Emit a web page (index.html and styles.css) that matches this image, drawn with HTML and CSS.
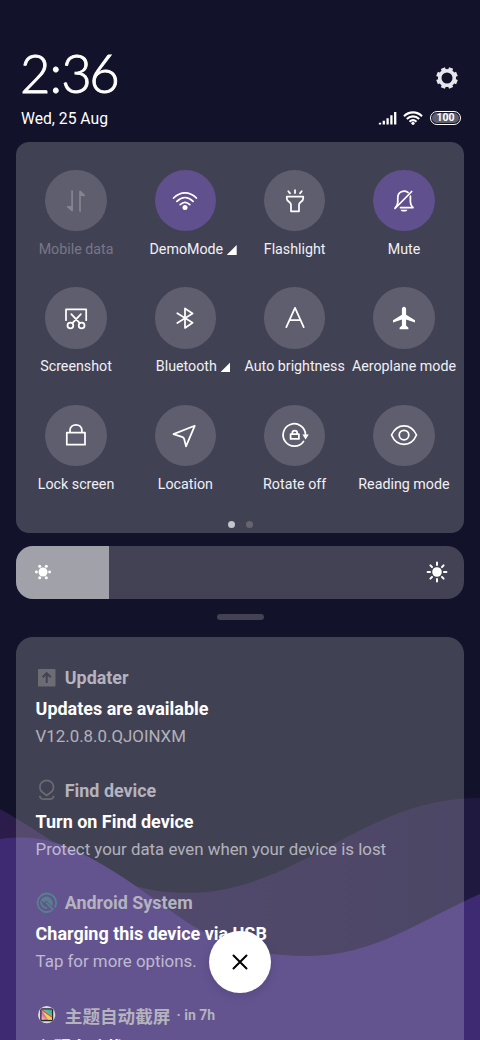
FILE: index.html
```html
<!DOCTYPE html>
<html lang="en">
<head>
<meta charset="utf-8">
<title>Control centre</title>
<link rel="stylesheet" href="styles.css">
</head>
<body>
<div class="screen">
  <svg class="wallpaper" viewBox="0 0 480 1040">
    <defs>
      <linearGradient id="back" x1="0" x2="1" y1="0" y2="0">
        <stop offset="0" stop-color="#2c1c4b"/><stop offset=".45" stop-color="#251c46"/><stop offset="1" stop-color="#20193f"/>
      </linearGradient>
    </defs>
    <path fill="url(#back)" d="M0 809C30 826 52 841 72 855C105 878 140 893 187 893C245 893 290 867 340 841C385 817 425 798 480 798V1040H0Z"/>
    <path fill="#3d2a73" d="M0 839C35 834 60 842 85 855C120 873 150 896 185 921C225 947 262 956 307 956C375 956 420 920 480 894V1040H0Z"/>
  </svg>

  <header class="header">
    <div class="header-row">
      <div class="clock">2<span class="colon">:</span>36</div>
      <svg class="gear" viewBox="-12 -12 24 24" fill="none" stroke="#e6e6ec"><circle r="7.3" stroke-width="3.6"/><path stroke-width="4.4" transform="rotate(22.5)" d="M0-7.5V-10.8M0 7.5V10.8M-7.5 0H-10.8M7.5 0H10.8M5.3-5.3 7.6-7.6M-5.3 5.3-7.6 7.6M-5.3-5.3-7.6-7.6M5.3 5.3 7.6 7.6"/></svg>
    </div>
    <div class="status-row">
      <div class="date">Wed, 25 Aug</div>
      <div class="status">
        <svg width="19" height="14" viewBox="0 0 19 14" stroke="#fff" stroke-width="2.3"><path d="M2 13.5V11.8M5.8 13.5V9.8M9.6 13.5V7.2M13.4 13.5V4.2M17.2 13.5V1"/></svg>
        <svg width="20" height="14" viewBox="0 0 20 14" fill="none" stroke="#fff" stroke-width="2.1"><path d="M1 5.2C6 .1 14 .1 19 5.2M3.8 8.1C7.5 4.5 12.5 4.5 16.2 8.1M6.5 10.8C8.6 8.9 11.4 8.9 13.5 10.8"/><circle cx="10" cy="12.3" r="1.6" fill="#fff" stroke="none"/></svg>
        <div class="battery"><span>100</span></div>
      </div>
    </div>
  </header>

  <section class="toggles">
    <div class="grid">
      <div class="tile disabled"><div class="disc"><svg viewBox="0 0 30 30"><path d="M11.1 5V24.5L6.8 20.7M19 25V5.5L23.2 9.5"/><path class="solid" d="M11.5 24.8 6.3 20H11.5ZM18.6 5.2 23.8 10H18.6Z" stroke="none"/></svg></div><div class="label">Mobile data</div></div>
      <div class="tile active"><div class="disc"><svg viewBox="0 0 30 30"><path d="M3.6 12C10.4 5 19.6 5 26.4 12M6.9 15.4C12 10.4 18 10.4 23.1 15.4M10.2 18.6C13.2 15.8 16.8 15.8 19.8 18.6"/><circle class="solid" cx="15" cy="21.4" r="2.5" stroke="none"/></svg></div><div class="label marked">DemoMode<i class="corner"></i></div></div>
      <div class="tile"><div class="disc"><svg viewBox="0 0 30 30"><path d="M6.8 10.5H23.2V12.5C23.2 16 19 15.5 19 18.8V25.3H11V18.8C11 15.5 6.8 16 6.8 12.5ZM15 4.2V7M8.3 5.2 10 7.4M21.7 5.2 20 7.4"/></svg></div><div class="label">Flashlight</div></div>
      <div class="tile active"><div class="disc"><svg viewBox="0 0 30 30"><path d="M6.2 21.8C7.8 20 8.8 18.5 8.8 16V11.5C8.8 5.5 15 3.8 19 6.4M21.4 10.2V16C21.4 18.5 22.4 20 24 21.7H11.5M22.7 5.5 6 22.5"/><path class="solid" stroke="none" d="M11.5 23.7H18.5C17.8 26.2 12.2 26.2 11.5 23.7Z"/></svg></div><div class="label">Mute</div></div>

      <div class="tile"><div class="disc"><svg viewBox="0 0 30 30"><path d="M5 17.2V6.4H25.2V17.2M10.3 11.2 18.8 20.2M19.9 11.2 11.4 20.2"/><circle cx="9.4" cy="22.4" r="2.9"/><circle cx="20.6" cy="22.4" r="2.9"/></svg></div><div class="label">Screenshot</div></div>
      <div class="tile"><div class="disc"><svg viewBox="0 0 30 30"><path d="M7.3 10.2 22.6 19.8 15 24.9V5.4L22.6 10.4 7.3 20"/></svg></div><div class="label marked">Bluetooth<i class="corner"></i></div></div>
      <div class="tile"><div class="disc"><svg viewBox="0 0 30 30"><path d="M6.3 24.1 15 4.9 23.7 24.1M9.6 17.2H20.4"/></svg></div><div class="label">Auto brightness</div></div>
      <div class="tile"><div class="disc"><svg viewBox="0 0 30 30"><path class="solid" stroke="none" d="M15 3.7C16.2 3.7 17.1 4.8 17.1 6.2V11.8L26 17.2V19.4L17.1 16.6V22.5L19.4 24.8V26.2H10.6V24.8L12.9 22.5V16.6L4 19.4V17.2L12.9 11.8V6.2C12.9 4.8 13.8 3.7 15 3.7Z"/></svg></div><div class="label">Aeroplane mode</div></div>

      <div class="tile"><div class="disc"><svg viewBox="0 0 30 30"><path d="M5.8 12.7H24V24.7H5.8ZM9 12.7V10.7C9 2.8 20.9 2.8 20.9 10.7V12.7"/></svg></div><div class="label">Lock screen</div></div>
      <div class="tile"><div class="disc"><svg viewBox="0 0 30 30"><path d="M24.7 5.8 3.5 14.1 12.6 17.1Q13.8 17.6 14.1 18.8L16 26.3Z"/></svg></div><div class="label">Location</div></div>
      <div class="tile"><div class="disc"><svg viewBox="0 0 30 30"><path d="M23.5 21.4A11.2 11.2 0 1 1 25.5 14.5M10.6 14.2H18.9V18.9H10.6ZM12.3 14V13C12.3 9.8 17.2 9.8 17.2 13V14"/><path class="solid" stroke="none" d="M22.4 14.6H28.8L25.6 19.4Z"/></svg></div><div class="label">Rotate off</div></div>
      <div class="tile"><div class="disc"><svg viewBox="0 0 30 30"><path d="M2.5 15C8 2.7 22 2.7 27.5 15C22 27.6 8 27.6 2.5 15Z"/><circle cx="15" cy="15.1" r="4.8"/></svg></div><div class="label">Reading mode</div></div>
    </div>
    <div class="dots"><i class="dot on"></i><i class="dot"></i></div>
  </section>

  <div class="brightness">
    <div class="level"><svg width="18" height="18" viewBox="0 0 18 18" fill="#fff"><circle cx="9" cy="9" r="4.5"/><circle cx="2.4" cy="9" r="1.4"/><circle cx="15.6" cy="9" r="1.4"/><circle cx="5.7" cy="3.3" r="1.5"/><circle cx="12.3" cy="3.3" r="1.5"/><circle cx="5.7" cy="14.7" r="1.5"/><circle cx="12.3" cy="14.7" r="1.5"/></svg></div>
    <svg width="22" height="22" viewBox="0 0 22 22" fill="#fff" stroke="#fff" stroke-width="2" stroke-linecap="round"><circle cx="11" cy="11" r="4.8" stroke="none"/><path d="M11 1.6V4M11 18V20.4M1.6 11H4M18 11H20.4M4.4 4.4 6 6M16 16 17.6 17.6M4.4 17.6 6 16M16 6 17.6 4.4"/></svg>
  </div>
  <div class="handle"></div>

  <main class="notifications">
    <article class="note">
      <div class="app"><svg class="app-icon" viewBox="0 0 22 22"><rect x="2" y="2" width="17.5" height="17.5" rx="1" fill="#6b6d73"/><path d="M10.7 16V6.5M6.6 10.3 10.7 6.2 14.8 10.3" fill="none" stroke="#424254" stroke-width="2"/></svg><span>Updater</span></div>
      <div class="title">Updates are available</div><div class="text">V12.0.8.0.QJOINXM</div>
    </article>
    <article class="note">
      <div class="app"><svg class="app-icon" viewBox="0 0 22 22" fill="none" stroke="#6a6b71" stroke-width="1.7"><path d="M10.7 16.5 5.5 12.5A6.8 6.8 0 1 1 15.9 12.5ZM3.6 16.8C4.1 19 5.4 20.2 7.4 20.2H14C16 20.2 17.3 19 17.8 16.8" stroke-linejoin="round"/></svg><span>Find device</span></div>
      <div class="title">Turn on Find device</div><div class="text">Protect your data even when your device is lost</div>
    </article>
    <article class="note">
      <div class="app"><svg class="app-icon" viewBox="0 0 22 22" fill="none" stroke="#587f8c" stroke-width="1.9"><path d="M15.8 18.5A9.2 9.2 0 1 1 18.7 15.5"/><path fill="#587f8c" stroke="none" d="M4.6 8A6.5 6.5 0 1 1 16 14.3L10.5 8.6 8.5 10.6Z"/><path d="M4.8 9.3C5.3 12.9 7.3 15.8 11 16.3M10.3 10.6 17.5 18"/></svg><span>Android System</span></div>
      <div class="title">Charging this device via USB</div><div class="text">Tap for more options.</div>
    </article>
    <article class="note">
      <div class="app"><svg class="app-icon" viewBox="0 0 22 22"><defs><linearGradient id="photo" x1="1" x2="0" y1="0" y2="1"><stop offset="0" stop-color="#3aa867"/><stop offset=".4" stop-color="#49c9b0"/><stop offset=".65" stop-color="#db64b4"/><stop offset="1" stop-color="#ece86a"/></linearGradient></defs><circle cx="10.7" cy="10.7" r="8.6" fill="#dedbe3"/><rect x="4.2" y="4.2" width="13" height="13" rx="2" fill="#292634"/><rect x="5.5" y="5.5" width="10.5" height="10.3" fill="url(#photo)"/><path d="M5.5 6 16 12V15.8H12Z" fill="#e9d653"/><path d="M6 6 16 13" stroke="#e04a63" stroke-width="1.5"/></svg><span class="cjk">主题自动截屏</span><span class="time">· in 7h</span></div>
      <div class="title cjk-title">主题自动截屏 is running</div>
    </article>
  </main>
  <div class="close"><svg width="16" height="16" viewBox="0 0 16 16" stroke="#000" stroke-width="2" stroke-linecap="round"><path d="M1.5 1.5 14.5 14.5M14.5 1.5 1.5 14.5"/></svg></div>
</div>
</body>
</html>
```
FILE: styles.css
```css
* { box-sizing: border-box; }
body { margin: 0; background: #12122a; font-family: Roboto, "Noto Sans CJK SC", sans-serif; color: #fff; }
.screen { position: relative; width: 480px; height: 1040px; overflow: hidden; padding: 44px 16px 0; display: flex; flex-direction: column; isolation: isolate; }
.wallpaper { position: absolute; inset: 0; width: 480px; height: 1040px; z-index: -1; }
.header { height: 98px; padding: 0 3px 0 5px; flex: none; }
.header-row { display: flex; justify-content: space-between; height: 60px; }
.clock { font-family: Lato, sans-serif; font-weight: 300; font-size: 52.5px; line-height: 57px; letter-spacing: -2.5px; margin-left: -1px; -webkit-text-stroke: .9px #fff; }
.colon { margin: 0 1.6px; }
.gear { width: 24px; height: 24px; margin: 22px 2px 0 0; }
.status-row { display: flex; justify-content: space-between; align-items: center; height: 28px; }
.date { font-size: 15.7px; }
.status { display: flex; align-items: center; gap: 6px; }
.battery { width: 31px; height: 14px; border: 1.5px solid #fff; border-radius: 7px; padding: 1px; margin-left: 1px; display: flex; }
.battery span { flex: 1; border-radius: 5px; background: #5d5d6e; font-size: 10.5px; line-height: 10px; font-weight: 700; text-align: center; }
.toggles { flex: none; height: 391px; border-radius: 13px; background: rgba(255,255,255,.2); padding: 28px 5.4px 0; }
.grid { display: grid; grid-template-columns: repeat(4, 1fr); grid-auto-rows: 117.3px; }
.tile { display: flex; flex-direction: column; align-items: center; gap: 8.6px; min-width: 0; }
.disc { width: 61.4px; height: 61.4px; border-radius: 50%; background: #5f5e6e; display: flex; align-items: center; justify-content: center; flex: none; }
.disc svg { width: 32px; height: 32px; padding: 1px; fill: none; stroke: #fff; stroke-width: 1.75; stroke-linejoin: round; stroke-linecap: round; }
.disc .solid { fill: #fff; }
.active .disc { background: #60508d; }
.disabled .disc svg { stroke: #858491; }
.disabled .disc .solid { fill: #858491; }
.label { position: relative; font-size: 14.25px; line-height: 19px; white-space: nowrap; color: #f0f0f4; }
.marked { margin-left: 2px; }
.disabled .label { color: #777785; }
.corner { position: absolute; left: calc(100% + 3.5px); bottom: 4px; width: 10px; height: 10px; background: #fff; clip-path: polygon(100% 0, 100% 100%, 0 100%); }
.dots { display: flex; justify-content: center; gap: 11px; margin-top: -1px; }
.dot { width: 7px; height: 7px; border-radius: 50%; background: #65656f; }
.dot.on { background: #c4c4ca; }
.brightness { flex: none; height: 53.5px; margin-top: 12.7px; border-radius: 17px; background: #424254; display: flex; align-items: center; justify-content: space-between; overflow: hidden; padding-right: 15.6px; }
.level { width: 93.3px; height: 100%; background: #a1a1aa; display: flex; align-items: center; padding-left: 17.5px; }
.handle { flex: none; width: 47px; height: 6px; border-radius: 3px; background: #424254; margin: 14.5px auto 17.6px; }
.notifications { flex: none; height: 500px; border-radius: 17px; background: rgba(255,255,255,.2); padding: 27.6px 20px 0 19.6px; }
.note { height: 112.5px; white-space: nowrap; }
.app { display: flex; align-items: center; height: 26px; gap: 7.2px; color: #b4b3be; font-size: 17.9px; font-weight: 700; }
.app-icon { width: 22px; height: 22px; }
.title { font-size: 17.95px; font-weight: 700; line-height: 26px; margin-top: 5.5px; }
.text { font-size: 16.85px; line-height: 26px; margin-top: .9px; color: rgba(255,255,255,.6); }
.cjk { font-size: 17.6px; }
.time { font-size: 14px; margin-left: -1px; }
.cjk-title { margin-top: 7px; font-size: 17.5px; }
.close { position: absolute; left: 209px; top: 931px; width: 62px; height: 62px; border-radius: 50%; background: #fff; box-shadow: 0 3px 10px rgba(30,15,70,.15); display: flex; align-items: center; justify-content: center; }
```
